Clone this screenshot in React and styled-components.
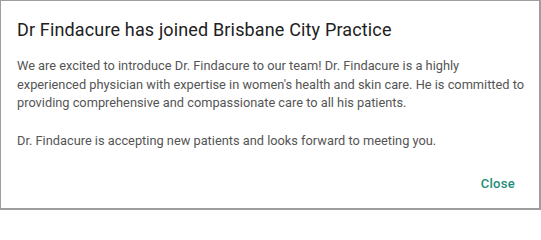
import React from 'react';
import styled, { createGlobalStyle } from 'styled-components';

const GlobalStyle = createGlobalStyle`
  html, body {
    margin: 0;
    padding: 0;
    background: #ffffff;
  }
  body {
    font-family: Roboto, "Liberation Sans", Arial, sans-serif;
  }
`;

const Dialog = styled.div`
  box-sizing: border-box;
  width: 541px;
  height: 210px;
  border: 1px solid #9e9e9e;
  border-right-width: 2px;
  border-bottom-width: 2px;
  background: #ffffff;
  display: flex;
  flex-direction: column;
`;

const Title = styled.h2`
  margin: 0;
  padding: 18px 16px 0 16px;
  font-size: 18px;
  font-weight: 400;
  letter-spacing: 0.15px;
  line-height: 22px;
  color: #212121;
`;

const Content = styled.div`
  padding: 16px 2px 0 16px;
  flex: 1;
`;

const Text = styled.p`
  margin: 0 0 19px 0;
  font-size: 12.8px;
  line-height: 18.6px;
  color: #555555;
`;

const Actions = styled.div`
  display: flex;
  justify-content: flex-end;
  padding: 0 16px 13px 16px;
`;

const TextButton = styled.button`
  border: none;
  background: transparent;
  padding: 4px 8px;
  font-family: inherit;
  font-size: 13px;
  font-weight: 500;
  letter-spacing: 0.3px;
  color: #1e8c78;
  cursor: pointer;
`;

export default function App() {
  return (
    <>
      <GlobalStyle />
      <Dialog>
        <Title>Dr Findacure has joined Brisbane City Practice</Title>
        <Content>
          <Text>
            We are excited to introduce Dr. Findacure to our team! Dr. Findacure is a highly
            <br />
            experienced physician with expertise in women's health and skin care. He is committed to
            <br />
            providing comprehensive and compassionate care to all his patients.
          </Text>
          <Text>Dr. Findacure is accepting new patients and looks forward to meeting you.</Text>
        </Content>
        <Actions>
          <TextButton>Close</TextButton>
        </Actions>
      </Dialog>
    </>
  );
}
